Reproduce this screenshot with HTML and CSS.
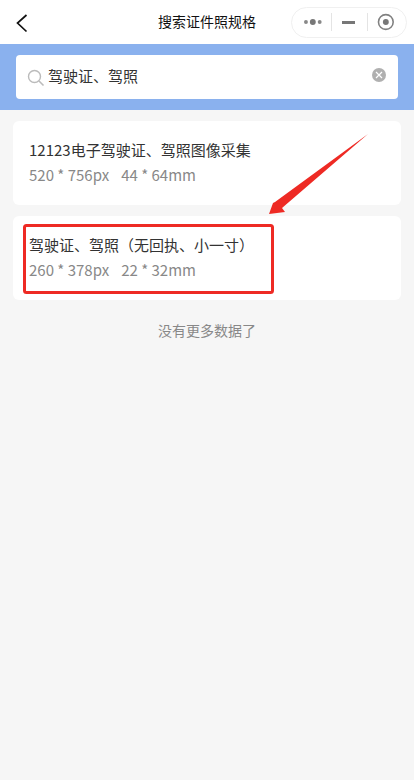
FILE: index.html
```html
<!DOCTYPE html>
<html lang="zh-CN">
<head>
  <meta charset="UTF-8">
  <title>搜索证件照规格</title>
  <meta name="viewport" content="width=device-width, initial-scale=1.0">
  <link rel="stylesheet" href="styles.css">
</head>
<body>

  <div class="nav-bar">
    <svg class="back-icon" width="14" height="20" viewBox="0 0 14 20">
      <path d="M11.5 2 L2.5 10 L11.5 18.5" fill="none" stroke="#111" stroke-width="1.7"/>
    </svg>
    <div class="nav-title">搜索证件照规格</div>
    <div class="capsule">
      <svg class="capsule-dots" width="20" height="8" viewBox="0 0 20 8">
        <circle cx="3" cy="4" r="2" fill="#888"/>
        <circle cx="10" cy="4" r="3" fill="#777"/>
        <circle cx="17" cy="4" r="2" fill="#888"/>
      </svg>
      <span class="capsule-line"></span>
      <span class="capsule-minus"></span>
      <span class="capsule-line"></span>
      <svg class="capsule-target" width="18" height="18" viewBox="0 0 18 18">
        <circle cx="9" cy="9" r="7.5" fill="none" stroke="#808080" stroke-width="1.6"/>
        <circle cx="9" cy="9" r="3" fill="#777"/>
      </svg>
    </div>
  </div>

  <div class="search-bar">
    <div class="search-box">
      <svg class="search-icon" width="18" height="18" viewBox="0 0 18 18">
        <circle cx="7.5" cy="7.5" r="6" fill="none" stroke="#bbb" stroke-width="1.4"/>
        <path d="M12 12 L16.5 16.5" stroke="#bbb" stroke-width="1.6"/>
      </svg>
      <span class="search-text">驾驶证、驾照</span>
      <span class="clear-btn">
        <svg width="8" height="8" viewBox="0 0 8 8">
          <path d="M1 1 L7 7 M7 1 L1 7" stroke="#fff" stroke-width="1.2"/>
        </svg>
      </span>
    </div>
  </div>

  <div class="list">
    <div class="card">
      <div class="card-title">12123电子驾驶证、驾照图像采集</div>
      <div class="card-size"><span>520 * 756px</span><span>44 * 64mm</span></div>
    </div>
    <div class="card">
      <div class="card-title">驾驶证、驾照（无回执、小一寸）</div>
      <div class="card-size"><span>260 * 378px</span><span>22 * 32mm</span></div>
    </div>
  </div>

  <div class="no-more">没有更多数据了</div>

  <!-- red markup drawn over the screenshot -->
  <svg class="markup" width="414" height="300" viewBox="0 0 414 300">
    <rect x="24.5" y="225.5" width="248" height="67" rx="2" fill="none" stroke="#ee2a24" stroke-width="3"/>
    <polygon points="368,134 275,202 273,203 269,214 285,212 282,208" fill="#ee2a24"/>
  </svg>

</body>
</html>
```

FILE: styles.css
```css
body {
  font-family: "Noto Sans CJK SC", "Liberation Sans", sans-serif;
  background: #f6f6f6;
  margin: 0;
  padding: 0;
  height: 780px;
  overflow: hidden;
  position: relative;
}

.nav-bar {
  height: 44px;
  background: white;
  display: flex;
  align-items: center;
  position: relative;
  padding: 0 7px 0 15px;
  justify-content: space-between;
}

.back-icon {
  margin-top: 1px;
}

.nav-title {
  position: absolute;
  left: 158px;
  top: 11px;
  font-size: 14px;
  line-height: 20px;
  color: #111;
}

.capsule {
  width: 116px;
  height: 31px;
  box-sizing: border-box;
  border: 1px solid #f0f0f0;
  border-radius: 16px;
  display: flex;
  align-items: center;
  padding: 0 11px;
}

.capsule-dots {
  margin-right: 8px;
}

.capsule-line {
  width: 1px;
  height: 18px;
  background: #e4e4e4;
}

.capsule-minus {
  width: 14px;
  height: 3px;
  background: #777;
  margin: 0 12px 0 10px;
}

.capsule-target {
  margin-left: 9px;
}

.search-bar {
  background: #8ab1ee;
  padding: 11px 16px;
}

.search-box {
  height: 44px;
  background: white;
  border-radius: 4px;
  display: flex;
  align-items: center;
  padding: 0 12px 0 11px;
}

.search-icon {
  margin-top: 2px;
}

.search-text {
  font-size: 15px;
  line-height: 22px;
  color: #333;
  margin: 0 0 2px 3px;
  flex: 1;
}

.clear-btn {
  width: 14px;
  height: 14px;
  border-radius: 50%;
  background: #b0b0b0;
  display: flex;
  align-items: center;
  justify-content: center;
  margin-top: -4px;
}

.list {
  padding: 11px 13px 0;
}

.card {
  background: white;
  border-radius: 6px;
  padding: 16px;
  margin-bottom: 11px;
}

.card-title {
  font-size: 15px;
  line-height: 26px;
  color: #333;
}

.card-size {
  font-size: 15px;
  line-height: 24px;
  margin-bottom: 2px;
  color: #888;
}

.card-size span {
  margin-right: 12px;
}

.no-more {
  text-align: center;
  font-size: 14px;
  line-height: 20px;
  color: #888;
  margin-top: 20px;
}

.markup {
  position: absolute;
  left: 0;
  top: 0;
}
```
